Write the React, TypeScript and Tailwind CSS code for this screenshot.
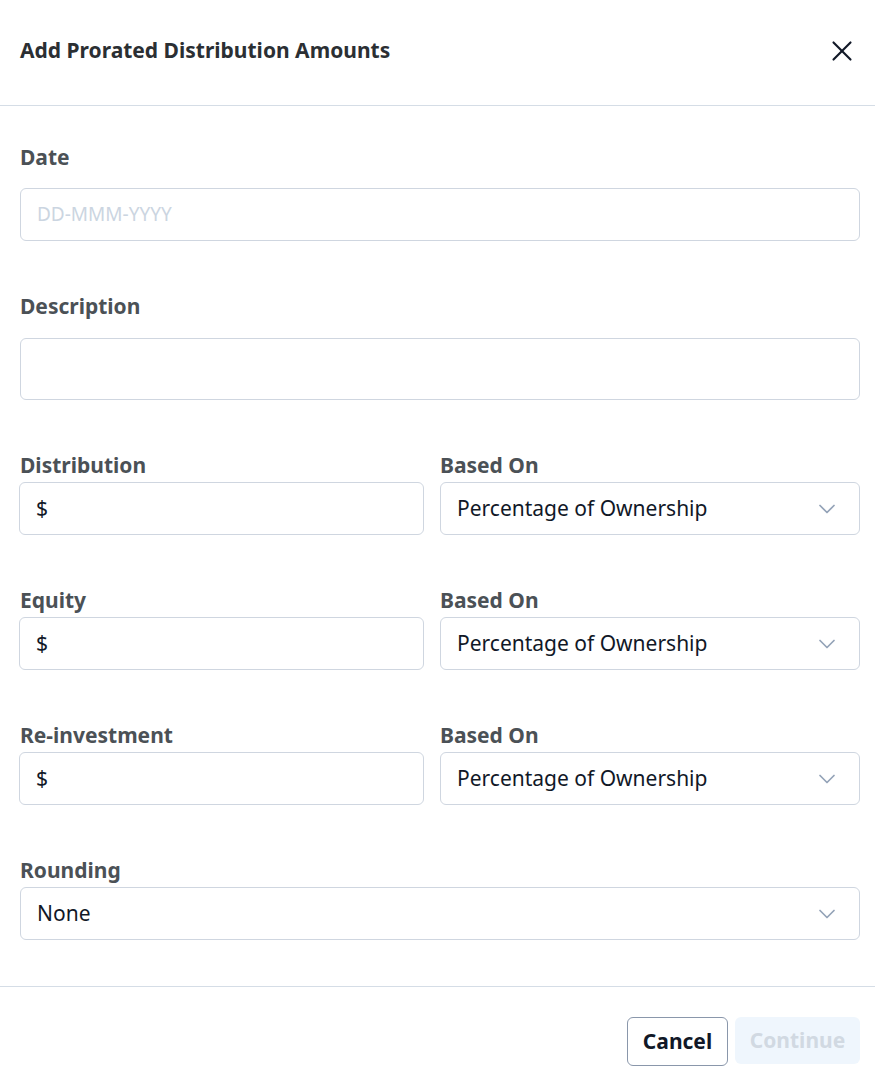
import { ChevronDown, X } from 'lucide-react'

const font = { fontFamily: '"Noto Sans", "Open Sans", sans-serif' }

function Label({ children }: { children: React.ReactNode }) {
  return <div className="text-[21px] font-bold text-[#4b5156] leading-[28px]">{children}</div>
}

function Select({ value }: { value: string }) {
  return (
    <div className="h-[53px] border border-[#cfd6e0] rounded-[6px] flex items-center justify-between pl-4 pr-[18px] text-[21px] text-[#111827]">
      <span>{value}</span>
      <ChevronDown className="w-7 h-7 text-[#94a3b8]" strokeWidth={1.5} />
    </div>
  )
}

function Money() {
  return (
    <div className="h-[53px] border border-[#cfd6e0] rounded-[6px] flex items-center px-4 text-[21px] text-[#111827]">
      $
    </div>
  )
}

function SplitRow({ label }: { label: string }) {
  return (
    <div className="grid grid-cols-[404px_1fr] gap-4">
      <div className="flex flex-col gap-[3px] -ml-px">
        <div className="ml-px"><Label>{label}</Label></div>
        <Money />
      </div>
      <div className="flex flex-col gap-[3px]">
        <Label>Based On</Label>
        <Select value="Percentage of Ownership" />
      </div>
    </div>
  )
}

export default function App() {
  return (
    <div className="w-[875px] h-[1079px] bg-white flex flex-col" style={font}>
      <div className="h-[106px] flex items-center justify-between pl-5 pr-[16px] pb-[4px] border-b border-[#d5dde6] shrink-0">
        <h1 className="text-[21px] font-bold text-[#2b2f33]">Add Prorated Distribution Amounts</h1>
        <X className="w-[34px] h-[34px] text-[#111827]" strokeWidth={1.5} />
      </div>

      <div className="pl-5 pr-[15px] pt-[37px] flex flex-col">
        <Label>Date</Label>
        <div className="mt-[17px] h-[53px] border border-[#cfd6e0] rounded-[6px] flex items-center px-4 text-[19px] text-[#cbd5e1]">
          DD-MMM-YYYY
        </div>

        <div className="mt-[51px]"><Label>Description</Label></div>
        <div className="mt-[18px] h-[62px] border border-[#cfd6e0] rounded-[6px]" />

        <div className="mt-[51px]"><SplitRow label="Distribution" /></div>
        <div className="mt-[51px]"><SplitRow label="Equity" /></div>
        <div className="mt-[51px]"><SplitRow label="Re-investment" /></div>

        <div className="mt-[51px] flex flex-col gap-[3px]">
          <Label>Rounding</Label>
          <Select value="None" />
        </div>
      </div>

      <div className="mt-[46px] border-t border-[#d5dde6] flex justify-end items-start gap-[7px] px-[15px] pt-[30px]">
        <button className="h-[49px] w-[101px] border border-[#8a97ab] rounded-[6px] text-[21px] font-bold text-[#111827]">
          Cancel
        </button>
        <button className="h-[47px] w-[125px] rounded-[6px] bg-[#eff6fd] text-[21px] font-bold text-[#d1d9e2]">
          Continue
        </button>
      </div>
    </div>
  )
}
